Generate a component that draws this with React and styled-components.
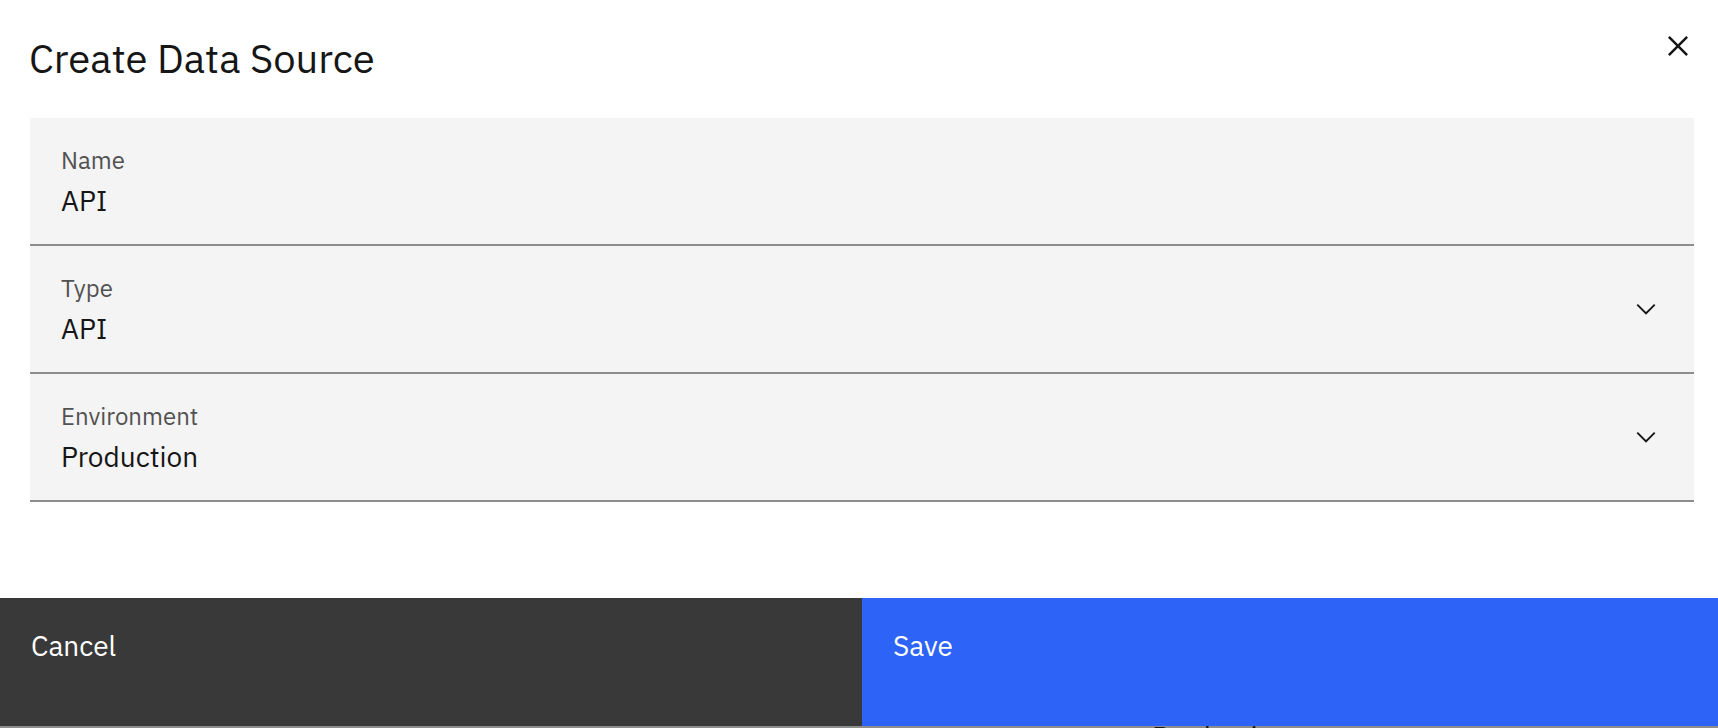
import React from 'react'
import styled, { createGlobalStyle } from 'styled-components'

const GlobalStyle = createGlobalStyle`
  html, body {
    margin: 0;
    padding: 0;
    background: #ffffff;
    overflow: hidden;
  }
  body {
    font-family: 'IBM Plex Sans', Roboto, 'Liberation Sans', Arial, sans-serif;
    color: #161616;
  }
`

const Modal = styled.div`
  width: 1718px;
  display: flex;
  flex-direction: column;
  background: #ffffff;
`

const Header = styled.header`
  display: flex;
  justify-content: space-between;
  align-items: flex-start;
  padding: 26px 20px 0 29px;
`

const Title = styled.h2`
  margin: 12px 0 0;
  font-size: 40px;
  line-height: 40px;
  font-weight: 400;
  color: #161616;
`

const CloseButton = styled.button`
  width: 40px;
  height: 40px;
  padding: 0;
  border: none;
  background: none;
  display: flex;
  align-items: center;
  justify-content: center;
  color: #161616;
  cursor: pointer;
`

const Fields = styled.div`
  display: flex;
  flex-direction: column;
  margin-top: 40px;
  padding: 0 24px 0 30px;
`

const Field = styled.div`
  height: 128px;
  box-sizing: border-box;
  background: #f4f4f4;
  border-bottom: 2px solid #8d8d8d;
  display: flex;
  align-items: center;
  justify-content: space-between;
`

const FieldText = styled.div`
  align-self: flex-start;
  display: flex;
  flex-direction: column;
  padding: 30px 0 0 31px;
`

const Label = styled.label`
  font-size: 24px;
  line-height: 24px;
  color: #525252;
`

const Value = styled.div`
  margin-top: 15px;
  font-size: 28px;
  line-height: 28px;
  color: #161616;
`

const Chevron = styled.svg`
  width: 30px;
  height: 30px;
  margin-right: 33px;
  fill: #161616;
`

const Footer = styled.footer`
  display: flex;
  flex-shrink: 0;
  margin-top: 96px;
  height: 128px;
`

const FooterButton = styled.button`
  flex: ${(p) => (p.$primary ? '1 1 auto' : '0 0 862px')};
  display: flex;
  align-items: flex-start;
  padding: 34px 0 0 31px;
  border: none;
  background: ${(p) => (p.$primary ? '#2d63f6' : '#393939')};
  color: #ffffff;
  font-family: inherit;
  font-size: 28px;
  line-height: 28px;
  text-align: left;
  cursor: pointer;
`

const Peek = styled.div`
  flex-shrink: 0;
  border-top: 2px solid #8d8d8d;
  background: #ffffff;
  height: 40px;
  padding-left: 1152px;
  font-size: 28px;
  line-height: 18px;
  color: #161616;
`

function ChevronDown() {
  return (
    <Chevron viewBox="0 0 32 32" aria-hidden="true">
      <path d="M16 22L6 12l1.4-1.4 8.6 8.6 8.6-8.6L26 12z" />
    </Chevron>
  )
}

function TextField({ label, value, select }) {
  return (
    <Field>
      <FieldText>
        <Label>{label}</Label>
        <Value>{value}</Value>
      </FieldText>
      {select && <ChevronDown />}
    </Field>
  )
}

export default function App() {
  return (
    <>
      <GlobalStyle />
      <Modal>
        <Header>
          <Title>Create Data Source</Title>
          <CloseButton aria-label="Close">
            <svg width="40" height="40" viewBox="0 0 32 32" fill="currentColor">
              <path d="M17.4141 16L24 9.4141 22.5859 8 16 14.5859 9.4143 8 8 9.4141 14.5859 16 8 22.5859 9.4143 24 16 17.4141 22.5859 24 24 22.5859 17.4141 16z" />
            </svg>
          </CloseButton>
        </Header>
        <Fields>
          <TextField label="Name" value="API" />
          <TextField label="Type" value="API" select />
          <TextField label="Environment" value="Production" select />
        </Fields>
        <Footer>
          <FooterButton>Cancel</FooterButton>
          <FooterButton $primary>Save</FooterButton>
        </Footer>
        <Peek>Production</Peek>
      </Modal>
    </>
  )
}
